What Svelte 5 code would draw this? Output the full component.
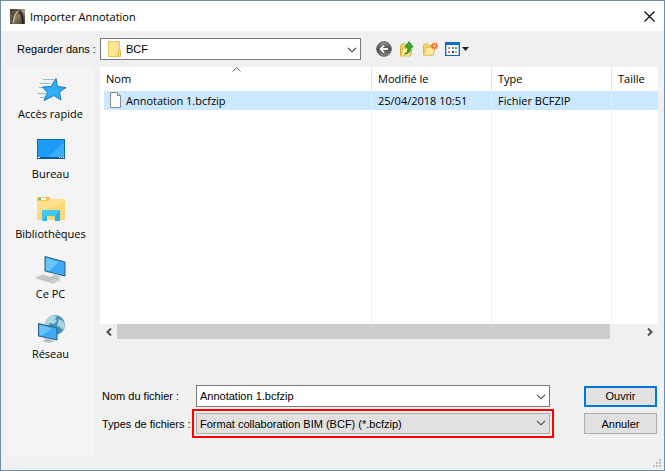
<script lang="ts">
	interface FileEntry {
		name: string;
		modified: string;
		type: string;
		size: string;
	}

	const places = [
		{ id: 'quick', label: 'Accès rapide' },
		{ id: 'desktop', label: 'Bureau' },
		{ id: 'libraries', label: 'Bibliothèques' },
		{ id: 'pc', label: 'Ce PC' },
		{ id: 'network', label: 'Réseau' }
	];

	const files: FileEntry[] = [
		{ name: 'Annotation 1.bcfzip', modified: '25/04/2018 10:51', type: 'Fichier BCFZIP', size: '' }
	];

	let selected = $state(files[0].name);
	let fileName = $state(files[0].name);

	function pick(file: FileEntry) {
		selected = file.name;
		fileName = file.name;
	}
</script>

{#snippet chevron()}
	<svg class="chevron" width="10" height="6" viewBox="0 0 10 6" aria-hidden="true">
		<path d="M1 .8 5 4.8 9 .8" fill="none" stroke="#444" stroke-width="1.1" />
	</svg>
{/snippet}

<div class="dialog" role="dialog" aria-labelledby="title">
	<header class="titlebar">
		<svg width="15" height="15" viewBox="0 0 15 15" aria-hidden="true">
			<defs>
				<linearGradient id="app-bg" x1="0" y1="0" x2="1" y2="1">
					<stop offset="0" stop-color="#3a3328" />
					<stop offset=".5" stop-color="#8b7d64" />
					<stop offset="1" stop-color="#3d3529" />
				</linearGradient>
			</defs>
			<rect width="15" height="15" fill="url(#app-bg)" />
			<path d="M0 15 1 9C3 4 6 1 9 1c3 1 5 6 6 13v1h-3C11 8 10 5 8 4 5 5 4 9 3 15z" fill="#5b503d" />
			<path d="M3 14C4 8 5 3 9 2" fill="none" stroke="#cfc3a8" stroke-width="1.2" />
			<path d="M9 2c3 2 4 7 4 13" fill="none" stroke="#241e16" stroke-width="1.5" />
			<path d="M10 0h5v7C14 4 12 1 10 0z" fill="#a3967c" />
		</svg>
		<h1 id="title">Importer Annotation</h1>
		<button class="close" aria-label="Fermer">
			<svg width="11" height="11" viewBox="0 0 11 11">
				<path d="M.5.5l10 10M10.5.5l-10 10" stroke="#000" stroke-width="1.1" />
			</svg>
		</button>
	</header>

	<div class="toolbar">
		<label for="folder">Regarder dans :</label>
		<div class="combo folder">
			<svg class="folder-icon" width="14" height="17" viewBox="0 0 14 17" aria-hidden="true">
				<path d="M.5.5h11v15H.5z" fill="#ffe593" stroke="#e9c558" />
				<path d="M10.5 9.5h2v6h-2z" fill="#ffe593" stroke="#e2b93f" />
			</svg>
			<select id="folder">
				<option>BCF</option>
			</select>
			{@render chevron()}
		</div>
		<div class="tools">
			<button aria-label="Précédent">
				<svg width="16" height="16" viewBox="0 0 16 16">
					<defs>
						<linearGradient id="back-bg" x1="0" y1="0" x2="0" y2="1">
							<stop offset="0" stop-color="#9a9a9a" />
							<stop offset=".5" stop-color="#4c4c4c" />
							<stop offset="1" stop-color="#8f8f8f" />
						</linearGradient>
					</defs>
					<circle cx="8" cy="8" r="7.3" fill="url(#back-bg)" stroke="#5c5c5c" />
					<path d="M12 8H5M8 4.5 4.5 8 8 11.5" fill="none" stroke="#f4f4f4" stroke-width="1.8" />
				</svg>
			</button>
			<button aria-label="Dossier parent">
				<svg width="16" height="16" viewBox="0 0 16 16">
					<path d="M1.5 4.5 3 3h3l1 1h5v10H1.5z" fill="#f3d46c" stroke="#d6ad3f" />
					<path d="M1.5 15 4 7h9l-2 8z" fill="#ffeb9c" stroke="#dfb646" />
					<path d="M5.5 13c3-1 3.500-3 3.500-7H6L10 .7 14 6h-2.300c0 4-1.700 7-6.200 7z" fill="#35b233" stroke="#16751a" stroke-width=".8" />
				</svg>
			</button>
			<button aria-label="Nouveau dossier">
				<svg width="16" height="16" viewBox="0 0 16 16">
					<path d="M1.5 4.5 2.5 3h3l1 1.5H11V14H1.5z" fill="#f3d46c" stroke="#dbb34a" />
					<path d="M1.5 14 4 6.500h9.500L11 14z" fill="#ffeb9c" stroke="#e4bd55" />
					<path d="M12.500 1.500v7M9 5h7M10 2.500l5 5M15 2.500l-5 5" stroke="#f4602c" stroke-width="1.4" />
					<circle cx="12.5" cy="5" r="1.400" fill="#ffe36a" />
				</svg>
			</button>
			<button class="views" aria-label="Affichage">
				<svg width="24" height="16" viewBox="0 0 24 16">
					<rect x=".5" y="1.500" width="14" height="13" fill="#fff" stroke="#0a6cd0" />
					<path d="M0 1h15v3H0z" fill="#0a6cd0" />
					<path d="M1 4h1v10H1zM13 4h1v10h-1z" fill="#9cc6ee" />
					<path d="M3 6h2v2H3z" fill="#9a9aa6" />
					<path d="M7 6h2v2H7z" fill="#8a78b4" />
					<path d="M10 6h2v2h-2z" fill="#3f9e58" />
					<path d="M3 10h2v2H3z" fill="#e2674a" />
					<path d="M7 10h2v2H7z" fill="#1b3c8c" />
					<path d="M10 10h2v2h-2z" fill="#d5a928" />
					<path d="M17 6h7l-3.500 4z" fill="#222" />
				</svg>
			</button>
		</div>
	</div>

	<main class="body">
		<nav class="places" aria-label="Emplacements">
			{#each places as place (place.id)}
				<button class="place">
					<svg width="32" height="32" viewBox="0 0 32 32" aria-hidden="true">
						{#if place.id === 'quick'}
							<path d="M8 6.5h11M5 10.5h10M2 20.5h9M5 24.5h6M4 14.5h4" stroke="#8fc0df" />
							<path d="M21 5.500 22.500 13.500 31 14.500 24.500 19 26 27 19 22.500 9 27.500 12.500 19.500 7.500 14 16 13.500z" fill="#31adf5" stroke="#1379bd" />
						{:else if place.id === 'desktop'}
							<rect x="2.5" y="6.5" width="27" height="19" fill="#1c9bf8" stroke="#0a6cae" />
							<path d="M13 24 29 9v15z" fill="#3babfb" />
							<path d="M2 24h28v2H2z" fill="#0a5b96" />
							<path d="M3 24h2v1H3zM24 24h1v1h-1zM26 24h1v1h-1zM28 24h1v1h-1z" fill="#fff" />
						{:else if place.id === 'libraries'}
							<path d="M2 4h13v5H2z" fill="#f0c648" />
							<path d="M4 5h7v2H4z" fill="#fff" />
							<path d="M4 5h2v2H4z" fill="#31b6a9" />
							<path d="M2 8h11l2-2h15v21H2z" fill="#ffe08a" />
							<path d="M2 20 30 9v18H2z" fill="#fcd775" />
							<path d="M7 17h18v11h-5v-5h-8v5H7z" fill="#1fb5ee" />
							<path d="M7 17h18l-5 6h-8l-5 5z" fill="#45c8f5" />
						{:else if place.id === 'pc'}
							<path d="M10 3.5 30 9v14L10 18z" fill="#3ea9f4" stroke="#2b607f" />
							<path d="m11 5 13 4-10 9-3-1z" fill="#6cc2fa" />
							<path d="m18 20 5 2v3l-5-1zM15 24l6-2 6 2-6 3z" fill="#c5cdd2" />
							<path d="m1 25 7-3 17 5-7 3z" fill="#d9dde0" stroke="#a0a8ad" stroke-width=".6" />
							<path d="m4 24 15 5M6 23l15 5M6 27l7-3M11 28l7-3" stroke="#a7aeb3" stroke-width=".6" />
						{:else}
							<circle cx="20" cy="12" r="10" fill="#4592b5" />
							<path d="M13 5c3-3 7-3 9-2l-2 3 2 2-3 3-4-1-2 3-3-1c0-3 1-5 3-7zM24 6l4 2 2 5-2 4-3-3-3-1z" fill="#a8d6e4" />
							<path d="M3.500 10.500 22 15v12L3.500 23z" fill="#3ea9f4" stroke="#2b607f" />
							<path d="m4.500 12 12 3.500-9 7-3-1z" fill="#6cc2fa" />
							<path d="m10 25 5 1v2h-5zM7 28l6-2 7 2-6 2z" fill="#b5bdc2" />
						{/if}
					</svg>
					<span>{place.label}</span>
				</button>
			{/each}
		</nav>

		<div class="content">
			<div class="list">
				<table>
					<thead>
						<tr>
							<th class="name">
								Nom
								<svg class="sort" width="9" height="5" viewBox="0 0 9 5" aria-hidden="true">
									<path d="M.5 4.5l4-4 4 4" fill="none" stroke="#666" />
								</svg>
							</th>
							<th class="date">Modifié le</th>
							<th class="type">Type</th>
							<th class="size">Taille</th>
						</tr>
					</thead>
					<tbody>
						{#each files as file (file.name)}
							<tr class:selected={selected === file.name} onclick={() => pick(file)}>
								<td class="name">
									<span class="file">
										<svg width="13" height="17" viewBox="0 0 13 17" aria-hidden="true">
											<path d="M1.5.5h7l3 3v12h-10z" fill="#fbfbfb" stroke="#8c8c8c" />
											<path d="M8.5.5v3h3" fill="#ddd" stroke="#8c8c8c" />
										</svg>
										{file.name}
									</span>
								</td>
								<td>{file.modified}</td>
								<td>{file.type}</td>
								<td>{file.size}</td>
							</tr>
						{/each}
						<tr class="rest"><td></td><td></td><td></td><td></td></tr>
					</tbody>
				</table>
			</div>
			<div class="scrollbar">
				<button aria-label="Défiler à gauche">
					<svg width="6" height="8" viewBox="0 0 6 8"><path d="M5 .5 1.500 4 5 7.500" fill="none" stroke="#505050" stroke-width="2" /></svg>
				</button>
				<div class="track"><div class="thumb"></div></div>
				<button aria-label="Défiler à droite">
					<svg width="6" height="8" viewBox="0 0 6 8"><path d="M1 .5 4.500 4 1 7.500" fill="none" stroke="#505050" stroke-width="2" /></svg>
				</button>
			</div>

			<form class="fields" onsubmit={(e) => e.preventDefault()}>
				<label for="filename">Nom du fichier :</label>
				<div class="combo">
					<input id="filename" type="text" bind:value={fileName} />
					{@render chevron()}
				</div>
				<button class="action primary">Ouvrir</button>

				<label for="filetype">Types de fichiers :</label>
				<div class="combo marked">
					<select id="filetype">
						<option>Format collaboration BIM (BCF) (*.bcfzip)</option>
					</select>
					{@render chevron()}
				</div>
				<button class="action" type="button">Annuler</button>
			</form>
		</div>
	</main>

	<svg class="grip" width="9" height="9" viewBox="0 0 9 9" aria-hidden="true">
		<path d="M6 0h2v2H6zM3 3h2v2H3zM6 3h2v2H6zM0 6h2v2H0zM3 6h2v2H3zM6 6h2v2H6z" fill="#bfbfbf" />
	</svg>
</div>

<style>
	:global(body) {
		margin: 0;
	}

	.dialog {
		position: relative;
		box-sizing: border-box;
		display: flex;
		flex-direction: column;
		min-height: 100vh;
		padding-bottom: 13px;
		border: 1px solid #6e8ca8;
		background: #f0f0f0;
		color: #000;
		font-family: 'Liberation Sans', Arial, sans-serif;
		font-size: 11px;
	}

	button,
	input,
	select {
		box-sizing: border-box;
		margin: 0;
		font: inherit;
		color: inherit;
	}

	button {
		display: flex;
		align-items: center;
		justify-content: center;
		padding: 0;
		border: 0;
		background: none;
	}

	.titlebar {
		display: flex;
		align-items: center;
		gap: 5px;
		height: 30px;
		padding-left: 9px;
		background: #fff;
	}

	h1 {
		flex: 1;
		margin: 0;
		font-family: 'Open Sans', 'Noto Sans', sans-serif;
		font-size: 11px;
		font-weight: 400;
	}

	.close {
		width: 30px;
		height: 28px;
	}

	.toolbar {
		display: flex;
		align-items: center;
		padding: 7px 6px;
	}

	.toolbar label {
		width: 83px;
		padding-left: 10px;
		white-space: nowrap;
	}

	.combo {
		position: relative;
		display: flex;
	}

	.combo.folder {
		flex: 0 1 261px;
	}

	.combo select,
	.combo input {
		width: 100%;
		height: 22px;
		padding: 0 20px 0 3px;
		border: 1px solid #7a7a7a;
		border-radius: 0;
		outline: 0;
		background: #fff;
		appearance: none;
	}

	.combo.folder select {
		padding-left: 25px;
	}

	.folder-icon {
		position: absolute;
		top: 3px;
		left: 8px;
	}

	.chevron {
		position: absolute;
		top: 9px;
		right: 4px;
		pointer-events: none;
	}

	.tools {
		display: flex;
		gap: 7px;
		padding-left: 15px;
	}

	.body {
		flex: 1;
		display: flex;
		gap: 6px;
		padding: 0 6px;
	}

	.places {
		width: 87px;
		background: #f4f4f4;
		font-family: 'Open Sans', 'Noto Sans', sans-serif;
	}

	.place {
		flex-direction: column;
		justify-content: flex-start;
		width: 100%;
		height: 60px;
		padding-top: 6px;
		line-height: 18px;
	}

	.content {
		flex: 1;
		min-width: 0;
	}

	.list {
		padding-left: 4px;
		background: #fff;
		font-family: 'Open Sans', 'Noto Sans', sans-serif;
	}

	table {
		width: 100%;
		border-spacing: 0;
		table-layout: fixed;
	}

	th,
	td {
		box-sizing: border-box;
		height: 19px;
		padding: 0 0 0 6px;
		border-right: 1px solid #e8f1fa;
		font-weight: 400;
		line-height: 16px;
		text-align: left;
		white-space: nowrap;
	}

	th {
		position: relative;
		height: 24px;
		border-color: #e5e5e5;
	}

	th:last-child,
	td:last-child {
		border-right: 0;
	}

	th.name {
		width: 268px;
		padding-left: 2px;
	}

	th.date,
	th.type {
		width: 120px;
	}

	td.name {
		padding-left: 5px;
	}

	.sort {
		position: absolute;
		top: 0;
		left: calc(50% - 6px);
	}

	.file {
		display: flex;
		align-items: center;
		gap: 4px;
	}

	.selected td {
		background: #cce8ff;
	}

	.rest td {
		height: 214px;
	}

	.scrollbar {
		display: flex;
		height: 15px;
	}

	.scrollbar button {
		width: 17px;
	}

	.track {
		flex: 1;
	}

	.thumb {
		width: 94%;
		height: 100%;
		background: #cdcdcd;
	}

	.fields {
		display: grid;
		grid-template-columns: 94px 1fr 73px;
		align-items: center;
		row-gap: 2px;
		padding: 46px 1px 0 2px;
	}

	.fields label {
		white-space: nowrap;
	}

	.fields .combo {
		margin-right: 34px;
	}

	.fields .combo.marked {
		margin: 0 30px 0 -4px;
		padding: 2px;
		border: 2px solid #fe0000;
	}

	.marked select {
		height: 21px;
		border-color: #adadad;
		background: #e1e1e1;
	}

	.marked .chevron {
		right: 6px;
	}

	.action {
		height: 21px;
		border: 1px solid #adadad;
		background: #e1e1e1;
	}

	.action.primary {
		border: 2px solid #0078d7;
	}

	.grip {
		position: absolute;
		right: 2px;
		bottom: 2px;
	}
</style>
